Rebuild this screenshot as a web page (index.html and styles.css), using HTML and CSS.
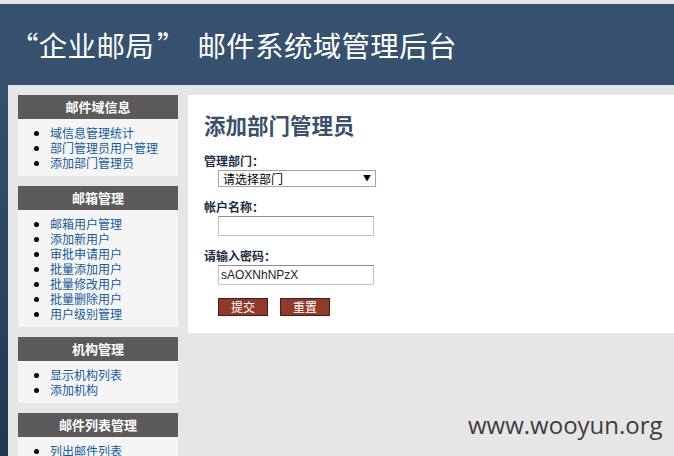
FILE: index.html
```html
<!DOCTYPE html>
<html lang="zh-CN">
<head>
<meta charset="utf-8">
<title>企业邮局 邮件系统域管理后台</title>
<link rel="stylesheet" href="styles.css">
</head>
<body>
<div class="topline"></div>
<header class="masthead">
  <h1 class="site-title"><span class="q-open">“</span>企业邮局<span class="q-close">”</span> 邮件系统域管理后台</h1>
</header>
<div class="page">
  <div class="edge"></div>
  <div class="workspace">
    <aside class="sidebar">
      <section class="menu-box">
        <div class="menu-head">邮件域信息</div>
        <ul class="menu-list">
          <li><a href="#">域信息管理统计</a></li>
          <li><a href="#">部门管理员用户管理</a></li>
          <li><a href="#">添加部门管理员</a></li>
        </ul>
      </section>
      <section class="menu-box">
        <div class="menu-head">邮箱管理</div>
        <ul class="menu-list">
          <li><a href="#">邮箱用户管理</a></li>
          <li><a href="#">添加新用户</a></li>
          <li><a href="#">审批申请用户</a></li>
          <li><a href="#">批量添加用户</a></li>
          <li><a href="#">批量修改用户</a></li>
          <li><a href="#">批量删除用户</a></li>
          <li><a href="#">用户级别管理</a></li>
        </ul>
      </section>
      <section class="menu-box">
        <div class="menu-head">机构管理</div>
        <ul class="menu-list">
          <li><a href="#">显示机构列表</a></li>
          <li><a href="#">添加机构</a></li>
        </ul>
      </section>
      <section class="menu-box">
        <div class="menu-head">邮件列表管理</div>
        <ul class="menu-list">
          <li><a href="#">列出邮件列表</a></li>
          <li><a href="#">添加邮件列表</a></li>
        </ul>
      </section>
    </aside>
    <main class="panel">
      <h2 class="panel-title">添加部门管理员</h2>
      <form class="form">
        <div class="field">
          <label class="field-label">管理部门：</label>
          <div class="select-wrap">
            <select class="select"><option>请选择部门</option></select>
            <span class="select-arrow">▼</span>
          </div>
        </div>
        <div class="field">
          <label class="field-label">帐户名称：</label>
          <input class="text-input" type="text">
        </div>
        <div class="field">
          <label class="field-label">请输入密码：</label>
          <input class="text-input" type="text" value="sAOXNhNPzX">
        </div>
        <div class="actions">
          <button class="btn" type="button">提交</button>
          <button class="btn" type="button">重置</button>
        </div>
      </form>
    </main>
  </div>
</div>
<div class="watermark">www.wooyun.org</div>
</body>
</html>
```

FILE: styles.css
```css
html, body {
  margin: 0;
  padding: 0;
}
body {
  width: 674px;
  height: 456px;
  overflow: hidden;
  background: #e6e6e6;
  font-family: "Noto Sans CJK SC", "Liberation Sans", sans-serif;
  position: relative;
}
.topline {
  height: 4px;
  background: #e2e6e9;
}
.masthead {
  height: 81px;
  background: #35516e;
  display: flex;
  align-items: center;
  padding-left: 20px;
  box-sizing: border-box;
}
.site-title {
  margin: 0;
  font-family: "Noto Sans CJK SC", sans-serif;
  font-size: 28.5px;
  font-weight: 400;
  color: #ffffff;
  line-height: 34px;
  letter-spacing: 0.3px;
  word-spacing: 5px;
}
.q-open {
  margin-left: -10px;
}
.q-close {
  margin-left: 3px;
}
.page {
  display: flex;
  min-height: 371px;
}
.edge {
  width: 8px;
  flex: none;
  background: linear-gradient(#35516e, #1f3650);
}
.workspace {
  flex: 1;
  display: flex;
  gap: 10px;
  align-items: flex-start;
  border-top: 2px solid #dde5ef;
  padding: 8px 0 0 10px;
  background: #e6e6e6;
}
.sidebar {
  width: 160px;
  flex: none;
  display: flex;
  flex-direction: column;
  gap: 10px;
}
.menu-head {
  height: 24px;
  line-height: 24px;
  background: #5b5b5b;
  color: #ffffff;
  font-weight: 700;
  font-size: 13px;
  text-align: center;
}
.menu-list {
  margin: 0;
  padding: 6px 0 6px 32px;
  background: #f5f5f5;
  list-style: disc;
  font-size: 12px;
  line-height: 15px;
  color: #000;
}
.menu-list a {
  color: #175a99;
  text-decoration: none;
}
.panel {
  flex: 1;
  background: #ffffff;
  padding: 16px 16px 16px 16px;
  min-height: 206px;
}
.panel-title {
  margin: 0;
  font-size: 21.5px;
  line-height: 28px;
  font-weight: 700;
  color: #3a5069;
}
.form {
  margin-top: 14px;
}
.field {
  margin-bottom: 12px;
}
.field-label {
  display: block;
  font-size: 12px;
  line-height: 16px;
  font-weight: 700;
  color: #1e2d44;
}
.select-wrap {
  position: relative;
  width: 158px;
  margin-left: 14px;
  margin-top: 1px;
}
.select {
  -webkit-appearance: none;
  appearance: none;
  width: 158px;
  height: 17px;
  box-sizing: border-box;
  border: 1px solid #a4a4a4;
  background: #ffffff;
  padding: 0 0 0 4px;
  margin: 0;
  font-family: "Noto Sans CJK SC", sans-serif;
  font-size: 12px;
  line-height: 15px;
  color: #000;
  border-radius: 0;
  display: block;
}
.select-arrow {
  position: absolute;
  right: 5px;
  top: 3px;
  font-size: 8px;
  line-height: 10px;
  color: #000;
  pointer-events: none;
}
.text-input {
  display: block;
  margin: 1px 0 0 14px;
  width: 156px;
  height: 20px;
  box-sizing: border-box;
  border: 1px solid #c2c2c2;
  border-top-color: #8e8e8e;
  padding: 0 2px;
  font-family: "Liberation Sans", Arial, sans-serif;
  font-size: 12px;
  color: #222;
  background: #fff;
}
.actions {
  display: flex;
  gap: 12px;
  padding-left: 14px;
  margin-top: 13px;
}
.btn {
  width: 50px;
  height: 18px;
  box-sizing: border-box;
  background: #8f3a2a;
  border: 1px solid #4e1b12;
  color: #ffffff;
  font-family: "Noto Sans CJK SC", sans-serif;
  font-size: 12px;
  line-height: 14px;
  padding: 0;
  margin: 0;
  border-radius: 0;
}
.watermark {
  position: absolute;
  left: 468px;
  top: 408px;
  font-family: "Open Sans", sans-serif;
  font-size: 24px;
  line-height: 34px;
  color: #3d3d3d;
}
```
